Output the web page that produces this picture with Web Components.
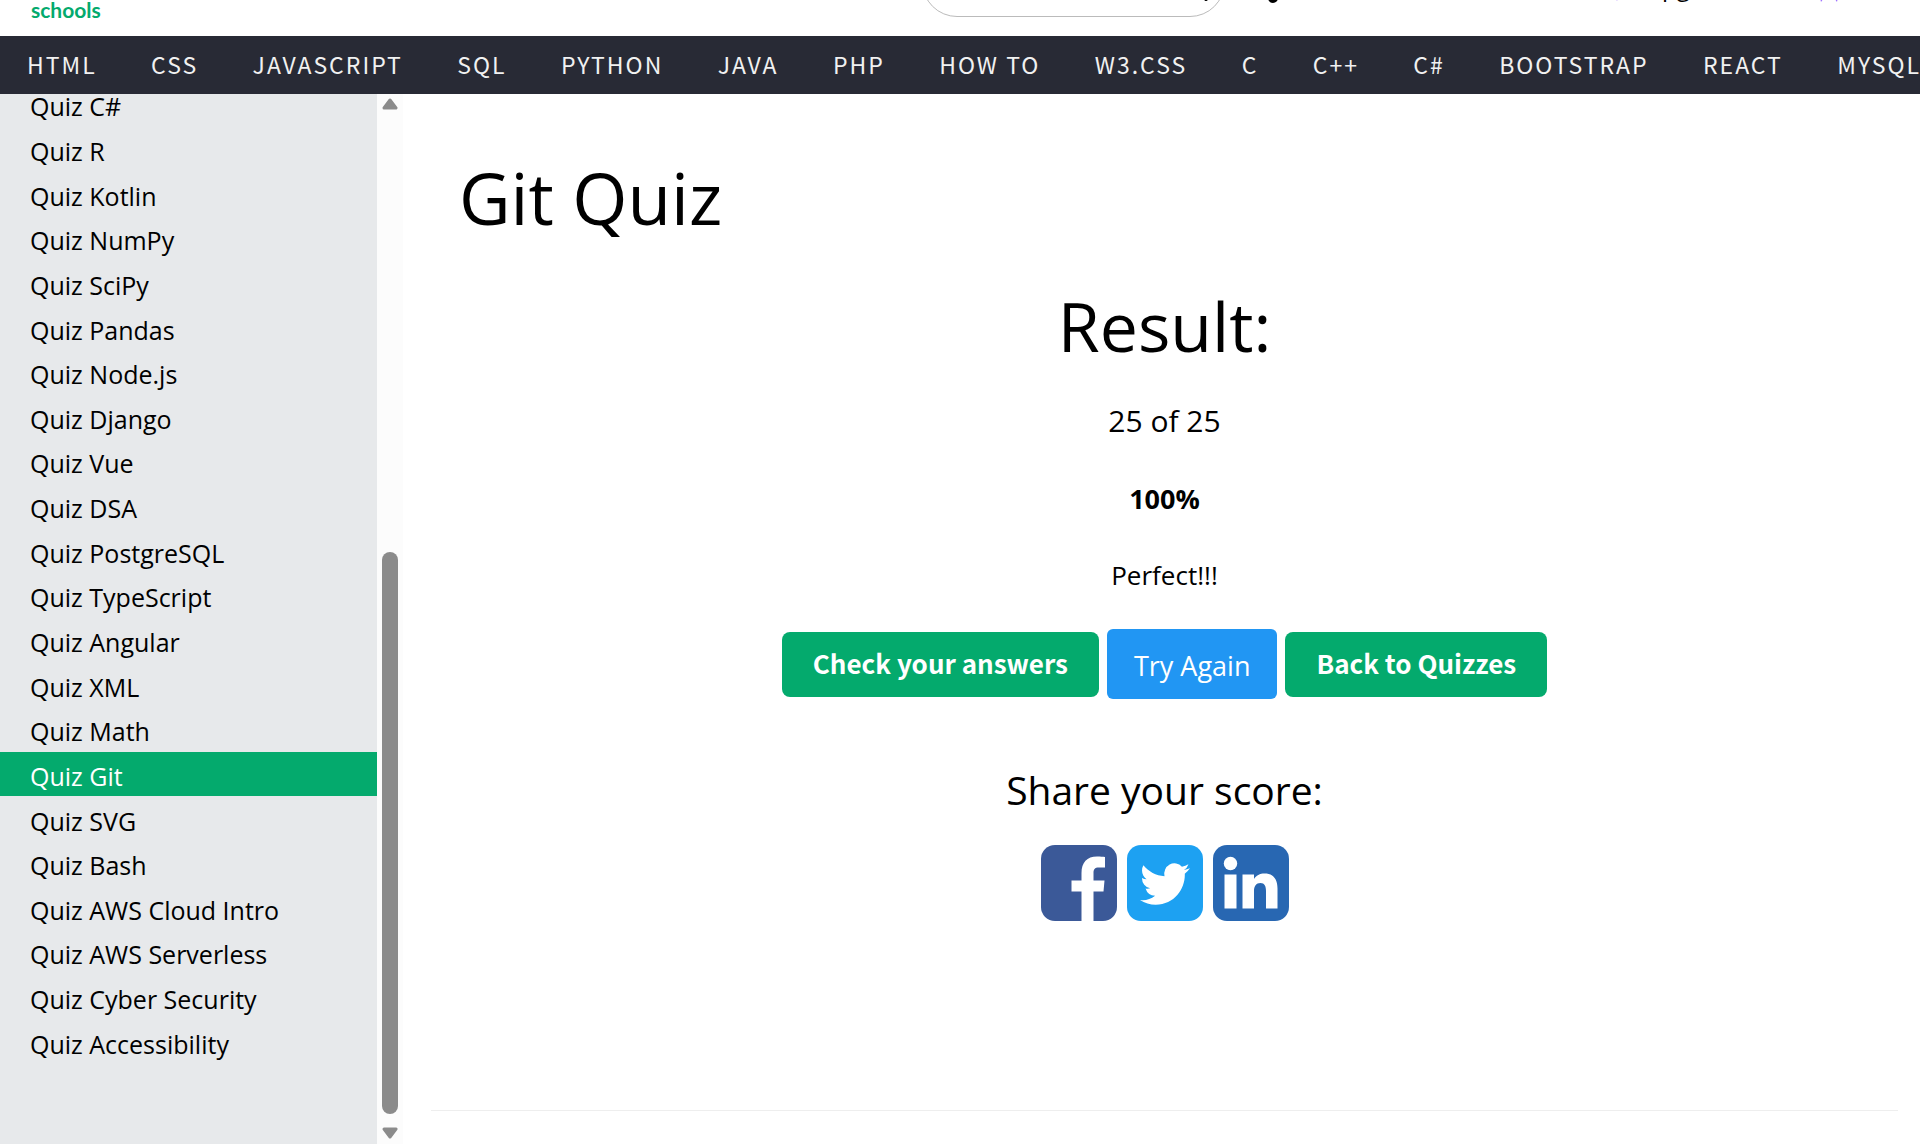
<!DOCTYPE html>
<html lang="en">
<head>
<meta charset="utf-8">
<title>Git Quiz</title>
<style>
  body { margin: 0; background: #fff; color: #000; font-family: "Open Sans", "Noto Sans", sans-serif; }
</style>
</head>
<body>
<quiz-page></quiz-page>

<script>
const define = (name, html, setup) => {
  const template = document.createElement('template');
  template.innerHTML = html;
  customElements.define(name, class extends HTMLElement {
    constructor() {
      super();
      this.attachShadow({ mode: 'open' }).append(template.content.cloneNode(true));
    }
    connectedCallback() { if (setup) setup(this, this.shadowRoot); }
  });
};

define('site-header', `
<style>
  :host { display: flex; align-items: flex-end; height: 36px; overflow: hidden; background: #fff; }
  .brand { flex: 20 1 0; box-sizing: border-box; padding: 0 0 16px 31px; font: 700 21px/20px Lato, sans-serif; color: #04aa6d; }
  .brand a { color: inherit; text-decoration: none; }
  .search { display: flex; align-items: center; box-sizing: border-box; flex: none; width: 303px; height: 70px; margin-bottom: 19px; padding: 0 14px 0 28px; border: 1px solid #bbb; border-radius: 35px; }
  input { flex: 1; min-width: 0; border: 0; outline: 0; background: none; font: 24px "Open Sans", sans-serif; }
  .tools { flex: 13 1 0; box-sizing: border-box; display: flex; align-items: flex-end; gap: 76px; padding: 0 79px 33px 37px; }
  .tools a { display: flex; align-items: center; gap: 15px; color: #000; text-decoration: none; font-size: 24px; line-height: 32px; }
  .upgrade { margin-left: auto; }
  svg { display: block; flex: none; }
</style>
<div class="brand"><a href="#">schools</a></div>
<label class="search">
  <input type="search" aria-label="Search">
  <svg width="38" height="38" viewBox="0 0 38 38" fill="none" stroke="#000" stroke-width="4" stroke-linecap="round"><circle cx="15" cy="16" r="11"/><path d="M23 24l11 12"/></svg>
</label>
<div class="tools">
  <svg width="22" height="22" viewBox="0 0 22 22"><circle cx="11" cy="17" r="5"/></svg>
  <a class="upgrade" href="#"><svg width="24" height="28" viewBox="0 0 24 28" fill="#9b6dff"><path d="M12 4l4 8 8 2-8 4-4 10-4-10-8-4 8-2z"/></svg>Upgrade</a>
  <a href="#" aria-label="Achievements"><svg width="24" height="28" viewBox="0 0 24 28" fill="#9b6dff"><path d="M2 4h20v14l-2 9-5-7H9l-5 7-2-9z"/></svg></a>
</div>`);

define('topic-bar', `
<style>
  :host { display: block; height: 58px; overflow: hidden; background: #282a35; }
  nav { display: flex; justify-content: space-between; width: max-content; min-width: calc(100% + 28px); }
  a { flex: none; padding: 0 27px; color: #f1f1f1; text-decoration: none; font: 23px/56px "Noto Sans CJK SC", sans-serif; letter-spacing: 2px; white-space: nowrap; }
</style>
<nav></nav>`, (el, root) => {
  root.querySelector('nav').innerHTML = el.getAttribute('topics').split('|').map(t => `<a href="#">${t}</a>`).join('');
});

define('quiz-menu', `
<style>
  :host { display: flex; box-sizing: border-box; overflow: hidden; }
  nav { flex: 1; display: flex; box-sizing: border-box; padding-bottom: 80px; background: #e7e9eb; }
  ul { flex: 1; display: flex; flex-direction: column; margin: -12px 0 0; padding: 0; list-style: none; }
  li { flex: 1; display: flex; }
  a { flex: 1; display: flex; align-items: center; padding: 4px 0 0 30px; color: #000; text-decoration: none; font-size: 25px; line-height: 40px; }
  .active { background: #04aa6d; color: #fff; }
  .bar { flex: none; display: flex; flex-direction: column; align-items: center; box-sizing: border-box; width: 26px; padding: 4px 0 5px; background: #fcfcfc; }
  .track { flex: 1; display: flex; flex-direction: column; justify-content: flex-end; padding: 0 0 13px; }
  .thumb { width: 16px; height: 56%; border-radius: 8px; background: #8b8b8b; }
  svg { display: block; flex: none; fill: #8b8b8b; stroke: #8b8b8b; stroke-width: 3; stroke-linejoin: round; }
</style>
<nav aria-label="Quizzes"><ul></ul></nav>
<div class="bar">
  <svg width="16" height="12" viewBox="0 0 16 12"><path d="M8 2L14 10H2Z"/></svg>
  <div class="track"><div class="thumb"></div></div>
  <svg width="16" height="12" viewBox="0 0 16 12"><path d="M8 10L14 2H2Z"/></svg>
</div>`, (el, root) => {
  const active = el.getAttribute('active');
  root.querySelector('ul').innerHTML = el.getAttribute('items').split('|').map(t =>
    `<li><a href="#"${t === active ? ' class="active" aria-current="page"' : ''}>Quiz ${t}</a></li>`).join('');
});

define('action-button', `
<style>
  :host { display: block; }
  button { display: block; box-sizing: border-box; padding: 0 31px 4px; border: 0; border-radius: 8px; background: #04aa6d; color: #fff; font: 700 26px/61px "Noto Sans CJK SC", sans-serif; white-space: nowrap; cursor: pointer; }
  :host([kind="retry"]) button { padding: 3px 27px 0; border-radius: 6px; background: #2196f3; font: 27px/67px "Open Sans", sans-serif; }
</style>
<button type="button"><slot></slot></button>`);

define('share-link', `
<style>
  :host { display: block; }
  svg { display: block; width: 76px; height: 76px; }
  a { display: none; }
  :host([network="facebook"]) .facebook, :host([network="twitter"]) .twitter, :host([network="linkedin"]) .linkedin { display: block; }
</style>
<a class="facebook" href="#" aria-label="Facebook"><svg viewBox="0 0 76 76"><rect width="76" height="76" rx="14" fill="#3b5998"/><path fill="#fff" d="M40.500 76V46.500H30.500V35.500H40.500V28C40.500 17.500 46 11.500 56 11.500C59.500 11.500 62 11.700 64 12V22.500H58C53.500 22.500 52.500 24.500 52.500 28V35.500H63.500L62.500 46.500H52.500V76Z"/></svg></a>
<a class="twitter" href="#" aria-label="Twitter"><svg viewBox="0 0 76 76"><rect width="76" height="76" rx="14" fill="#1da1f2"/><path fill="#fff" transform="translate(13 13.600) scale(2.080 2.120)" d="M23.950 4.570a10 10 0 0 1-2.820.770 4.960 4.960 0 0 0 2.160-2.720c-.950.550-2 .950-3.130 1.180a4.920 4.920 0 0 0-8.380 4.480C7.690 8.090 4.070 6.130 1.640 3.160a4.820 4.820 0 0 0-.670 2.470c0 1.710.870 3.210 2.190 4.100a4.900 4.900 0 0 1-2.230-.620v.060a4.920 4.920 0 0 0 3.950 4.830 5 5 0 0 1-2.210.080 4.940 4.940 0 0 0 4.600 3.420A9.870 9.870 0 0 1 0 19.540a14 14 0 0 0 7.550 2.210c9.050 0 14-7.500 14-13.980 0-.210 0-.420-.020-.630a9.940 9.940 0 0 0 2.460-2.550z"/></svg></a>
<a class="linkedin" href="#" aria-label="LinkedIn"><svg viewBox="0 0 76 76"><rect width="76" height="76" rx="14" fill="#2867b2"/><g fill="#fff"><circle cx="17.500" cy="18.500" r="6.700"/><path d="M11.500 29.500H23.500V63.500H11.500ZM29.500 29.500H41V34C43 30.500 47 28.500 51.500 28.500C60.500 28.500 64.500 34 64.500 43.500V63.500H53V46C53 41 51.500 38 47.500 38C43 38 41 41.500 41 46V63.500H29.500Z"/></g></svg></a>`);

define('quiz-result', `
<style>
  :host { display: flex; flex-direction: column; align-items: center; text-align: center; }
  h2, p, h3 { margin: 0; font-weight: 400; }
  h2 { font-size: 68px; line-height: 100px; }
  .score { margin-top: 21px; font-size: 30px; line-height: 48px; }
  .percent { margin-top: 32px; font-size: 27px; line-height: 44px; font-weight: 700; }
  .verdict { margin-top: 32px; font-size: 26px; line-height: 44px; }
  .actions { display: flex; align-items: center; gap: 8px; margin-top: 32px; }
  h3 { margin-top: 59px; font-size: 39px; line-height: 64px; }
  .share { display: flex; gap: 10px; margin-top: 23px; }
</style>
<h2>Result:</h2>
<p class="score">25 of 25</p>
<p class="percent">100%</p>
<p class="verdict">Perfect!!!</p>
<div class="actions">
  <action-button>Check your answers</action-button>
  <action-button kind="retry">Try Again</action-button>
  <action-button>Back to Quizzes</action-button>
</div>
<h3>Share your score:</h3>
<div class="share">
  <share-link network="facebook"></share-link>
  <share-link network="twitter"></share-link>
  <share-link network="linkedin"></share-link>
</div>`);

define('quiz-page', `
<style>
  :host { display: flex; flex-direction: column; height: 100vh; overflow: hidden; }
  site-header, topic-bar { flex: none; }
  .body { flex: 1; min-height: 0; display: flex; }
  quiz-menu { flex: none; width: 403px; }
  main { flex: 1; padding: 0 22px 33px 28px; display: flex; flex-direction: column; }
  h1 { margin: 54px 0 28px 28px; font-size: 71px; line-height: 100px; font-weight: 400; }
  hr { width: 100%; margin: auto 0 0; border: 0; border-top: 1px solid #eee; }
</style>
<site-header></site-header>
<topic-bar topics="HTML|CSS|JAVASCRIPT|SQL|PYTHON|JAVA|PHP|HOW TO|W3.CSS|C|C++|C#|BOOTSTRAP|REACT|MYSQL"></topic-bar>
<div class="body">
  <quiz-menu active="Git" items="C#|R|Kotlin|NumPy|SciPy|Pandas|Node.js|Django|Vue|DSA|PostgreSQL|TypeScript|Angular|XML|Math|Git|SVG|Bash|AWS Cloud Intro|AWS Serverless|Cyber Security|Accessibility"></quiz-menu>
  <main>
    <h1>Git Quiz</h1>
    <quiz-result></quiz-result>
    <hr>
  </main>
</div>`);
</script>
</body>
</html>
